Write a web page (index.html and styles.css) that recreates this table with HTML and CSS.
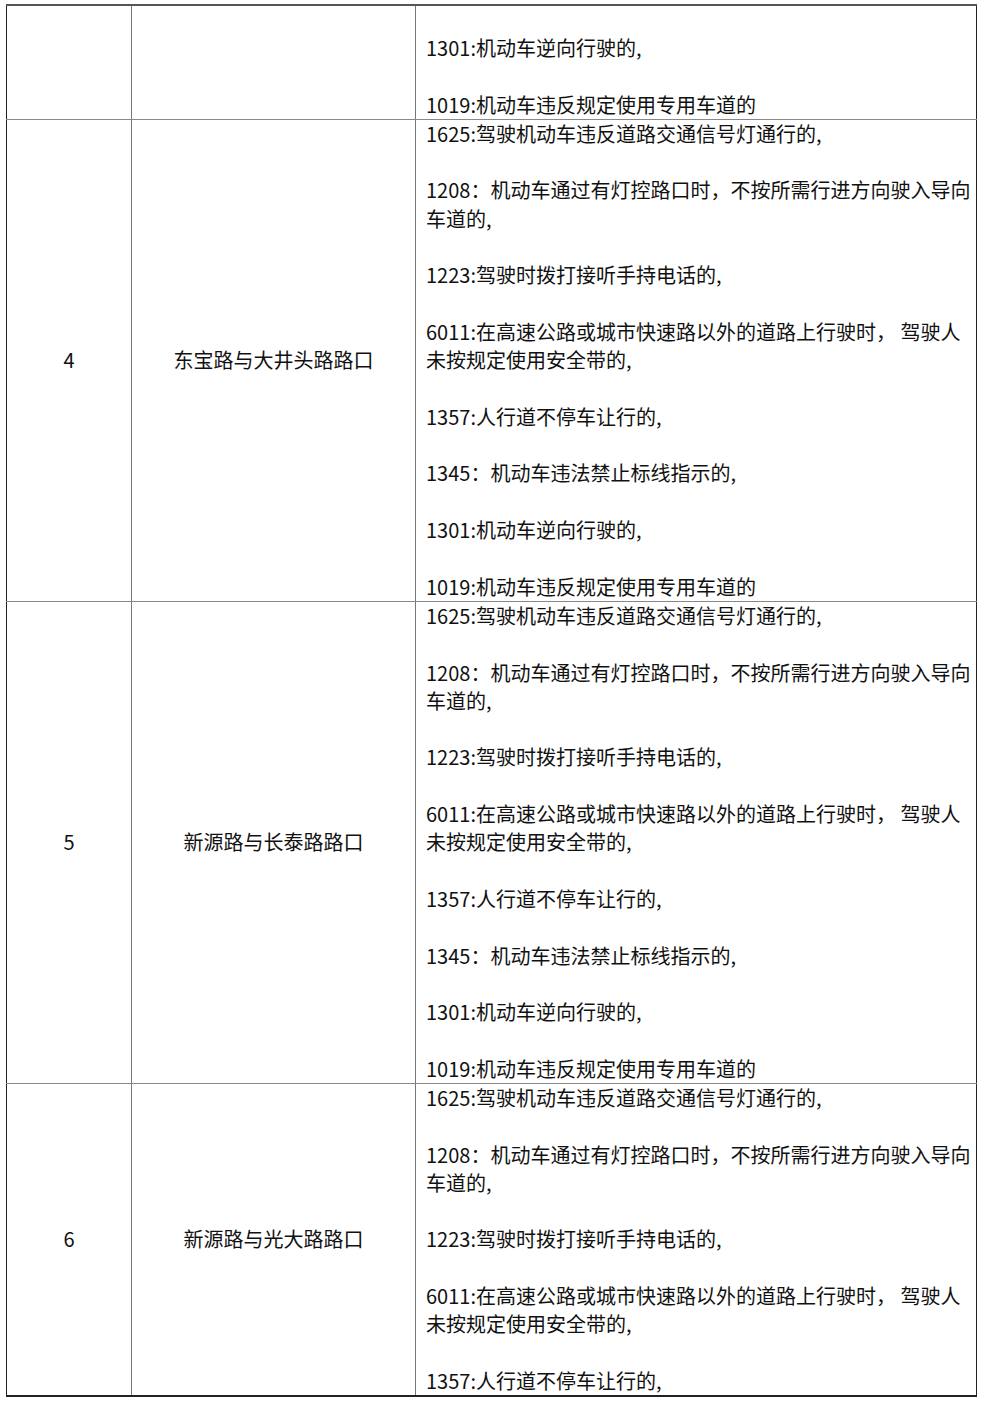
FILE: index.html
```html
<!DOCTYPE html>
<html lang="zh-CN">
<head>
<meta charset="utf-8">
<link rel="stylesheet" href="styles.css">
</head>
<body>
<table class="grid">
  <colgroup>
    <col class="c-no">
    <col class="c-place">
    <col class="c-rules">
  </colgroup>
  <tr>
    <td class="no"></td>
    <td class="place"></td>
    <td class="rules rules-top">
      <p class="item">1301:机动车逆向行驶的,</p>
      <p class="item">1019:机动车违反规定使用专用车道的</p>
    </td>
  </tr>
  <tr>
    <td class="no">4</td>
    <td class="place">东宝路与大井头路路口</td>
    <td class="rules">
      <p class="item">1625:驾驶机动车违反道路交通信号灯通行的,</p>
      <p class="item">1208：机动车通过有灯控路口时，不按所需行进方向驶入导向<br>车道的,</p>
      <p class="item">1223:驾驶时拨打接听手持电话的,</p>
      <p class="item">6011:在高速公路或城市快速路以外的道路上行驶时， 驾驶人<br>未按规定使用安全带的,</p>
      <p class="item">1357:人行道不停车让行的,</p>
      <p class="item">1345：机动车违法禁止标线指示的,</p>
      <p class="item">1301:机动车逆向行驶的,</p>
      <p class="item">1019:机动车违反规定使用专用车道的</p>
    </td>
  </tr>
  <tr>
    <td class="no">5</td>
    <td class="place">新源路与长泰路路口</td>
    <td class="rules">
      <p class="item">1625:驾驶机动车违反道路交通信号灯通行的,</p>
      <p class="item">1208：机动车通过有灯控路口时，不按所需行进方向驶入导向<br>车道的,</p>
      <p class="item">1223:驾驶时拨打接听手持电话的,</p>
      <p class="item">6011:在高速公路或城市快速路以外的道路上行驶时， 驾驶人<br>未按规定使用安全带的,</p>
      <p class="item">1357:人行道不停车让行的,</p>
      <p class="item">1345：机动车违法禁止标线指示的,</p>
      <p class="item">1301:机动车逆向行驶的,</p>
      <p class="item">1019:机动车违反规定使用专用车道的</p>
    </td>
  </tr>
  <tr class="last">
    <td class="no">6</td>
    <td class="place">新源路与光大路路口</td>
    <td class="rules">
      <p class="item">1625:驾驶机动车违反道路交通信号灯通行的,</p>
      <p class="item">1208：机动车通过有灯控路口时，不按所需行进方向驶入导向<br>车道的,</p>
      <p class="item">1223:驾驶时拨打接听手持电话的,</p>
      <p class="item">6011:在高速公路或城市快速路以外的道路上行驶时， 驾驶人<br>未按规定使用安全带的,</p>
      <p class="item">1357:人行道不停车让行的,</p>
    </td>
  </tr>
</table>
</body>
</html>
```

FILE: styles.css
```css
html, body {
  margin: 0;
  padding: 0;
  background: #fff;
}

body {
  padding: 4px 0 0 6px;
  font-family: "Liberation Sans Narrow", "Noto Sans CJK SC", "Liberation Sans", sans-serif;
  font-size: 20px;
  color: #111;
}

.grid {
  border-collapse: collapse;
  table-layout: fixed;
  width: 970px;
  border: 1px solid #222;
  border-top: 2px solid #555;
  border-bottom: 2px solid #222;
}

.c-no { width: 125px; }
.c-place { width: 284px; }
.c-rules { width: 561px; }

.grid td {
  border-left: 1px solid #777;
  border-right: 1px solid #777;
  border-top: 1px solid #888;
  border-bottom: 1px solid #888;
  padding: 0;
  vertical-align: middle;
  line-height: 28.3px;
}

.grid td:first-child { border-left: 1px solid #222; }
.grid td:last-child { border-right: 1px solid #222; }
.grid tr:first-child td { border-top: 2px solid #555; }
.grid tr.last td { border-bottom: 2px solid #222; }

.no, .place {
  text-align: center;
}

.grid td.rules {
  padding: 0 4px 0 10px;
  text-align: left;
  white-space: nowrap;
}

.grid td.rules-top {
  padding-top: 28px;
}

.item {
  margin: 0 0 28.3px 0;
}

.item:last-child {
  margin-bottom: 0;
}
```
